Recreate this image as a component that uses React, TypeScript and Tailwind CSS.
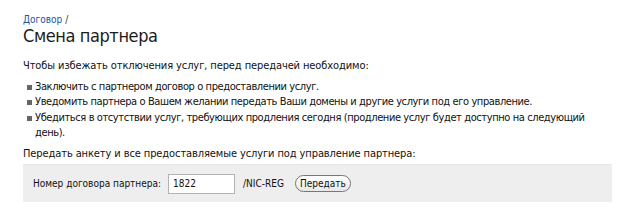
export default function App() {
  const items = [
    'Заключить с партнером договор о предоставлении услуг.',
    'Уведомить партнера о Вашем желании передать Ваши домены и другие услуги под его управление.',
    'Убедиться в отсутствии услуг, требующих продления сегодня (продление услуг будет доступно на следующий день).',
  ];

  return (
    <div className="bg-white w-[627px] h-[218px] pl-[23px] pr-[10px] pt-[13px] text-[#111] text-[11px] leading-[15.5px] tracking-[-0.1px] font-['DejaVu_Sans_Condensed','DejaVu_Sans',Verdana,sans-serif]">
      {/* Breadcrumb */}
      <div className="text-[10px] leading-[13px] tracking-normal">
        <a href="#" className="text-[#1a54a6]">Договор</a>{' '}
        <span className="text-[#333]">/</span>
      </div>
      <h1 className="text-[18px] leading-[20px] tracking-[-0.4px] text-[#1c1c1c]">Смена партнера</h1>

      <p className="mt-[12px]">Чтобы избежать отключения услуг, перед передачей необходимо:</p>

      <ul className="mt-[5px] w-[572px] tracking-[-0.4px]">
        {items.map((t) => (
          <li key={t} className="flex">
            <span className="w-[12px] shrink-0 flex pt-[6px] pl-[4px]">
              <span className="block w-[5px] h-[5px] bg-[#666]" />
            </span>
            <span>{t}</span>
          </li>
        ))}
      </ul>

      <p className="mt-[5px]">Передать анкету и все предоставляемые услуги под управление партнера:</p>

      {/* Form */}
      <div className="mt-[3px] w-[589px] h-[38px] bg-[#eeeeee] border-t border-[#e6e6e6] flex items-center pl-[10px] text-[10px] tracking-normal">
        <span>Номер договора партнера:</span>
        <input
          defaultValue="1822"
          className="ml-[7px] w-[67px] h-[20px] bg-white border border-[#b3b3b3] px-[4px] text-[10px] outline-none"
        />
        <span className="ml-[8px]">/NIC-REG</span>
        <button className="ml-[11px] h-[17px] px-[4px] rounded-full border border-[#777] bg-gradient-to-b from-white to-[#e8e8e8] text-[10px] leading-none">
          Передать
        </button>
      </div>
    </div>
  );
}
